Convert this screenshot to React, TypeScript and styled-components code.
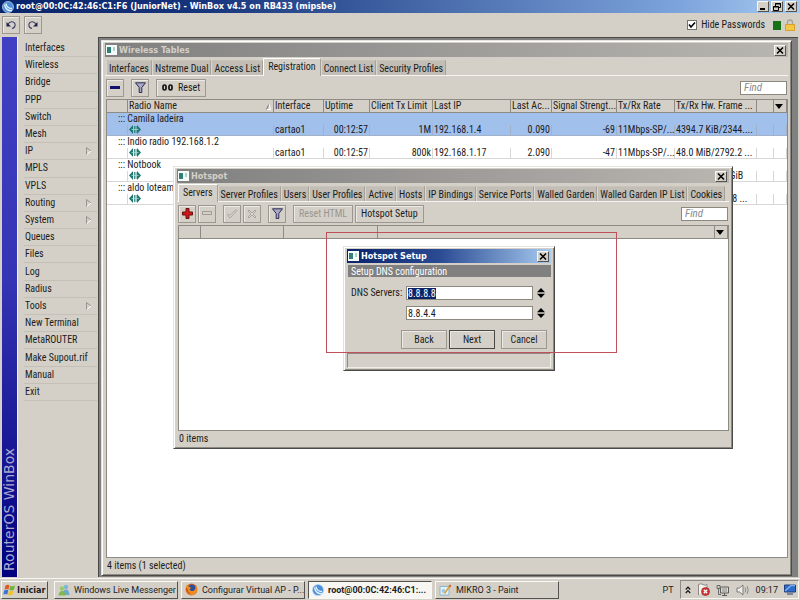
import React, { useEffect, useRef } from "react";
import styled, { createGlobalStyle, css } from "styled-components";

const FACE = "#d4d0c8";
const UI = `"Roboto Condensed", "Roboto", sans-serif`;
const CAPTION = `"DejaVu Sans Condensed", "DejaVu Sans", sans-serif`;

const GlobalStyle = createGlobalStyle`
  * { box-sizing: border-box; }
  body { margin: 0; background: ${FACE}; }
  button, input { font: inherit; color: inherit; margin: 0; }
  svg { display: block; flex: none; }
`;

const raised = css`
  border: 1px solid;
  border-color: #f8f8f4 #55534f #55534f #f8f8f4;
`;

const Screen = styled.div`
  min-height: 100vh;
  display: flex;
  flex-direction: column;
  background: ${FACE};
  color: #1c1c1c;
  font: 10px/12px ${UI};
  overflow: hidden;
`;

const AppCaption = styled.header`
  display: flex;
  align-items: center;
  gap: 2px;
  height: 13px;
  padding: 0 3px 0 2px;
  background: linear-gradient(90deg, #0a246a 0%, #16347c 25%, #7da4dc 85%, #a6caf0 100%);
`;

const CaptionText = styled.h1<{ $dim?: boolean }>`
  flex: 1;
  min-width: 0;
  margin: 0;
  overflow: hidden;
  white-space: nowrap;
  color: ${(p) => (p.$dim ? "#d4d0c8" : "#ffffff")};
  font: bold 9px/13px ${CAPTION};
`;

const CaptionButton = styled.button`
  ${raised}
  display: grid;
  place-items: center;
  width: 12px;
  height: 11px;
  padding: 0;
  background: ${FACE};
`;

const Toolbar = styled.div`
  display: flex;
  align-items: center;
  gap: 4px;
  height: 24px;
  padding: 0 5px 0 2px;
`;

const Spacer = styled.span`
  flex: 1;
`;

const ToolButton = styled.button<{ $wide?: boolean }>`
  display: flex;
  align-items: center;
  justify-content: center;
  gap: 4px;
  min-width: 18px;
  height: 18px;
  padding: ${(p) => (p.$wide ? "0 5px" : "0")};
  white-space: nowrap;
  background: ${FACE};
  border: 1px solid #9c9890;
  box-shadow: inset 1px 1px #eceae4;
  &:disabled {
    color: #9a968e;
  }
`;

const CheckLabel = styled.label`
  display: flex;
  align-items: center;
  gap: 4px;
  margin-right: 4px;
`;

const CheckBox = styled.input`
  appearance: none;
  width: 10px;
  height: 10px;
  border: 1px solid #77736c;
  background: #fff;
  &:checked {
    background: #fff
      url("data:image/svg+xml,%3Csvg xmlns='http://www.w3.org/2000/svg' viewBox='0 0 8 8'%3E%3Cpath d='M1 3.5 3 6 7 1.5' fill='none' stroke='black' stroke-width='1.6'/%3E%3C/svg%3E");
  }
`;

const LinkLight = styled.span`
  width: 8px;
  height: 9px;
  background: #177217;
`;

const Main = styled.div`
  flex: 1;
  display: flex;
  align-items: stretch;
  padding: 0 2px 1px 2px;
`;

const Brand = styled.div`
  flex: none;
  width: 15px;
  display: flex;
  align-items: center;
  padding: 6px 0 0;
  writing-mode: vertical-rl;
  transform: rotate(180deg);
  background: linear-gradient(0deg, #4040c4 0%, #3434b4 45%, #1a1a96 75%, #000080 100%);
  color: #a9a9cf;
  font: 14px/15px "DejaVu Sans", sans-serif;
  white-space: nowrap;
`;

const Nav = styled.nav`
  flex: none;
  width: 80px;
  border-left: 1px solid #f4f2ee;
  padding: 3px 0 0 6px;
`;

const NavList = styled.ul`
  display: grid;
  grid-auto-rows: 1fr;
  height: 361px;
  margin: 0;
  padding: 0;
  list-style: none;
`;

const NavItem = styled.button`
  display: flex;
  align-items: center;
  justify-content: space-between;
  width: 100%;
  height: 100%;
  padding: 0 5px 0 1px;
  border: 0;
  border-bottom: 1px solid #c4c0b8;
  background: none;
  text-align: left;
  white-space: nowrap;
`;

const Workspace = styled.main`
  position: relative;
  flex: 1;
  display: flex;
  min-width: 0;
  margin-left: 1px;
  padding: 2px 6px 1px 2px;
  background: #808080;
  border: solid #4a4844;
  border-width: 1px 0 0 1px;
`;

const Frame = styled.section`
  display: flex;
  flex-direction: column;
  min-width: 0;
  background: ${FACE};
  border: 1px solid;
  border-color: #e4e2dc #4c4a46 #4c4a46 #e4e2dc;
  box-shadow: inset 1px 1px #ffffff, inset -1px -1px #8c8882;
  padding: 2px 3px;
`;

const WirelessFrame = styled(Frame)`
  flex: 1;
`;

const HotspotFrame = styled(Frame)`
  position: absolute;
  left: 74px;
  top: 128px;
  width: 560px;
  height: 283px;
`;

const SetupFrame = styled(Frame)`
  position: absolute;
  left: 244px;
  top: 208px;
  width: 212px;
`;

const Marker = styled.div`
  position: absolute;
  left: 227px;
  top: 194px;
  width: 291px;
  height: 121px;
  border: 1px solid #c0505c;
  pointer-events: none;
`;

const Caption = styled.header<{ $active?: boolean }>`
  flex: none;
  display: flex;
  align-items: center;
  gap: 2px;
  height: 14px;
  padding: 0 2px 0 1px;
  background: ${(p) =>
    p.$active
      ? "linear-gradient(90deg, #0a246a, #2a4a92 45%, #a6caf0)"
      : "linear-gradient(90deg, #808080, #b8b6b0)"};
`;

const Tabs = styled.div`
  display: flex;
  align-items: flex-end;
  flex: none;
  height: 19px;
  padding-left: 1px;
  border-bottom: 1px solid #f6f4f0;
`;

const Tab = styled.button<{ $on?: boolean }>`
  flex: none;
  height: ${(p) => (p.$on ? 18 : 15)}px;
  padding: ${(p) => (p.$on ? "0 4px 2px" : "1px 2px 0")};
  margin-bottom: ${(p) => (p.$on ? -1 : 0)}px;
  border: 0;
  border-left: 1px solid ${(p) => (p.$on ? "#ffffff" : "#dad7d0")};
  border-right: 1px solid #a5a199;
  border-top: 1px solid ${(p) => (p.$on ? "#ffffff" : "#c8c4bc")};
  background: ${(p) => (p.$on ? FACE : "#c2beb6")};
  white-space: nowrap;
`;

const PaneTools = styled.div`
  flex: none;
  display: flex;
  align-items: center;
  gap: 7px;
  height: 23px;
  padding: 0 1px;
`;

const Pair = styled.div`
  display: flex;
  gap: 2px;
`;

const Find = styled.input`
  width: 47px;
  height: 14px;
  padding: 0 3px;
  border: 1px solid #8c8880;
  background: #fff;
  font-size: 11px;
  &::placeholder {
    color: #8a8a8a;
    font-style: italic;
    opacity: 1;
  }
`;

const TableBox = styled.div`
  flex: 1;
  margin-left: 1px;
  overflow: hidden;
  background: #fff;
  border: 1px solid #8e8a84;
`;

const Grid = styled.table`
  width: 100%;
  table-layout: fixed;
  border-collapse: separate;
  border-spacing: 0;
`;

const Col = styled.col<{ $w?: number }>`
  width: ${(p) => (p.$w ? `${p.$w}px` : "auto")};
`;

const Th = styled.th`
  height: 13px;
  padding: 0 0 0 1px;
  white-space: nowrap;
  text-align: left;
  font-weight: normal;
  background: ${FACE};
  border-right: 1px solid #8e8a84;
  border-bottom: 1px solid #8e8a84;
`;

const HeadLine = styled.span`
  display: flex;
  align-items: center;
  justify-content: space-between;
  padding-right: 2px;
`;

const Row = styled.tr<{ $selected?: boolean }>`
  background: ${(p) => (p.$selected ? "#a2c0ec" : "#ffffff")};
`;

const NoteCell = styled.td`
  height: 12px;
  padding: 0 0 1px 11px;
  line-height: 11px;
  white-space: nowrap;
  vertical-align: top;
`;

const Td = styled.td<{ $right?: boolean }>`
  height: 11px;
  padding: 0 1px;
  line-height: 10px;
  white-space: nowrap;
  vertical-align: top;
  text-align: ${(p) => (p.$right ? "right" : "left")};
  border: solid rgba(160, 156, 150, 0.4);
  border-width: 0 1px 1px 0;
`;

const Status = styled.footer`
  flex: none;
  height: 15px;
  padding-left: 2px;
  line-height: 15px;
`;

const Subtitle = styled.p`
  height: 12px;
  margin: 2px 0 9px 1px;
  padding-left: 3px;
  overflow: hidden;
  background: #808080;
  color: #ffffff;
  line-height: 14px;
`;

const Fields = styled.form`
  display: grid;
  grid-template-columns: 52px 127px 10px;
  grid-auto-rows: 14px;
  gap: 6px 3px;
  align-items: center;
  padding-left: 4px;
  white-space: nowrap;
`;

const Field = styled.input`
  grid-column: 2;
  width: 100%;
  height: 14px;
  padding: 0 1px;
  border: 1px solid #8c8880;
  background: #fff;
  outline: 0;
  &::selection {
    background: #0a246a;
    color: #fff;
  }
`;

const Spin = styled.button`
  display: grid;
  place-items: center;
  width: 10px;
  height: 12px;
  padding: 0;
  border: 0;
  background: none;
`;

const Actions = styled.div`
  display: flex;
  justify-content: flex-end;
  gap: 2px;
  padding: 10px 4px 4px 0;
`;

const ActionButton = styled.button<{ $primary?: boolean; $apart?: boolean }>`
  width: 46px;
  height: 19px;
  padding: 0;
  margin-left: ${(p) => (p.$apart ? 4 : 0)}px;
  background: ${FACE};
  border: 1px solid ${(p) => (p.$primary ? "#4a4844" : "#9c9890")};
  box-shadow: inset 1px 1px #eceae4;
`;

const DialogStatus = styled.div`
  height: 15px;
  border: 1px solid;
  border-color: #8e8a84 #f0eee8 #f0eee8 #8e8a84;
`;

const TaskBar = styled.footer`
  display: flex;
  align-items: center;
  gap: 3px;
  height: 22px;
  padding: 0 1px;
  border-top: 1px solid #f8f6f2;
  font: 9px/12px "Roboto", sans-serif;
`;

const StartButton = styled.button`
  ${raised}
  display: flex;
  align-items: center;
  gap: 1px;
  height: 18px;
  width: 47px;
  margin-right: 3px;
  padding: 0 1px;
  font: bold 9px/12px ${CAPTION};
  background: ${FACE};
`;

const Task = styled.button<{ $on?: boolean }>`
  ${raised}
  ${(p) => p.$on && css`border-color: #55534f #f8f8f4 #f8f8f4 #55534f;`}
  flex: 0 1 124px;
  display: flex;
  align-items: center;
  gap: 4px;
  min-width: 0;
  height: 18px;
  padding: 0 2px 0 3px;
  background: ${(p) => (p.$on ? "#f7f6f3" : FACE)};
  font-weight: ${(p) => (p.$on ? "bold" : "normal")};
`;

const TaskText = styled.span`
  white-space: nowrap;
`;

const Tray = styled.div`
  display: flex;
  align-items: center;
  gap: 6px;
  height: 19px;
  margin-left: 3px;
  padding: 0 2px 0 4px;
  border: 1px solid;
  border-color: #8e8a84 #f8f6f2 #f8f6f2 #8e8a84;
`;

const WinBoxIcon = () => (
  <svg width="12" height="12" viewBox="0 0 12 12">
    <circle cx="6" cy="6" r="5.5" fill="#4b8fd8" stroke="#b9d6f2" strokeWidth="0.8" />
    <path d="M2.5 3.5C3.5 8 6 10 10 9.5M4 2.5c.5 3 2.5 5 6 5" fill="none" stroke="#e6f2fc" strokeWidth="1.3" />
  </svg>
);

const WindowIcon = () => (
  <svg width="11" height="10" viewBox="0 0 11 10">
    <path d="M0 0h11v10H0z" fill="#f4fbf8" />
    <path d="M1 2h4v6H1z" fill="#2f8078" />
    <path d="M7 2h2v4H7z" fill="#a8d4ca" />
  </svg>
);

const CloseIcon = () => (
  <svg width="8" height="7" viewBox="0 0 8 7">
    <path d="M1 .5 7 6.5M7 .5 1 6.5" stroke="#000" strokeWidth="1.5" />
  </svg>
);

const MinimizeIcon = () => (
  <svg width="8" height="7" viewBox="0 0 8 7">
    <path d="M1 5h5v2H1z" fill="#000" />
  </svg>
);

const RestoreIcon = () => (
  <svg width="8" height="8" viewBox="0 0 8 8">
    <path d="M2.5 3V.5h5v4H5.5M2 1h6M.5 3.5h5v4h-5zM0 4h6" fill="none" stroke="#000" />
  </svg>
);

const UndoIcon = ({ flip = false }: { flip?: boolean }) => (
  <svg width="12" height="12" viewBox="0 0 12 12">
    <g transform={flip ? "matrix(-1 0 0 1 12 0)" : undefined}>
      <path d="M3 5.5C4 2.5 9 1.5 10 5c.5 2.5-1 4-3 4.5" fill="none" stroke="#3c3c60" strokeWidth="1.1" />
      <path d="M1.5 3v4.5H6z" fill="#23234c" />
    </g>
  </svg>
);

const LockIcon = () => (
  <svg width="10" height="12" viewBox="0 0 10 12">
    <path d="M2.5 6V3.5a2.5 2.5 0 0 1 5 0V6" fill="none" stroke="#a8a294" strokeWidth="1.3" />
    <path d="M0 5h10v7H0z" fill="#d8a02c" />
    <path d="M1 6h8v5H1z" fill="#f4c844" />
  </svg>
);

const SubmenuIcon = () => (
  <svg width="6" height="8" viewBox="0 0 6 8">
    <path d="M.5 7.5v-7L5 4" fill="none" stroke="#98948c" />
    <path d="M5 4 1 7.5" stroke="#fff" />
  </svg>
);

const MinusIcon = () => (
  <svg width="10" height="3" viewBox="0 0 10 3">
    <path d="M0 0h10v3H0z" fill="#101070" />
  </svg>
);

const HollowMinusIcon = () => (
  <svg width="10" height="5" viewBox="0 0 10 5">
    <path d="M.5 .5h9v3h-9z" fill="none" stroke="#a09c94" />
  </svg>
);

const PlusIcon = () => (
  <svg width="11" height="11" viewBox="0 0 11 11">
    <path d="M4 .5h3V4h3.5v3H7v3.5H4V7H.5V4H4z" fill="#d01818" stroke="#6c0c0c" />
  </svg>
);

const CheckIcon = () => (
  <svg width="11" height="10" viewBox="0 0 11 10">
    <path d="M.5 6 3 9l7-7.5-1-1-6 6L1.5 5z" fill="#dedbd4" stroke="#a8a49c" />
  </svg>
);

const CrossIcon = () => (
  <svg width="10" height="10" viewBox="0 0 10 10">
    <path d="M1 2 2 1l3 3 3-3 1 1-3 3 3 3-1 1-3-3-3 3-1-1 3-3z" fill="#dedbd4" stroke="#a8a49c" />
  </svg>
);

const FunnelIcon = () => (
  <svg width="11" height="11" viewBox="0 0 11 11">
    <path d="M.5 .8h10L6.8 5.5v5H4.2v-5z" fill="#a8a8c4" stroke="#2c2c54" />
  </svg>
);

const ResetIcon = () => (
  <svg width="12" height="7" viewBox="0 0 12 7">
    <rect x="1" y="1" width="3" height="5" rx="1.5" fill="none" stroke="#111" strokeWidth="1.7" />
    <rect x="7" y="1" width="3" height="5" rx="1.5" fill="none" stroke="#111" strokeWidth="1.7" />
  </svg>
);

const LinkIcon = () => (
  <svg width="12" height="9" viewBox="0 0 12 9">
    <path d="M4 0v9L0 4.5zM8 0v9l4-4.5z" fill="#1c7870" />
    <path d="M5.5 1v7M7 1v7" stroke="#1c7870" strokeWidth="0.8" />
    <path d="M2.5 4.5h7" stroke="#a4dcd2" strokeWidth="0.8" />
  </svg>
);

const SortIcon = () => (
  <svg width="5" height="7" viewBox="0 0 5 7">
    <path d="M.5 6.5 3 1" stroke="#77736c" />
    <path d="m3 1 1.5 5.5H1" fill="none" stroke="#fff" />
  </svg>
);

const DropIcon = () => (
  <svg width="8" height="5" viewBox="0 0 8 5">
    <path d="M0 0h8L4 5z" fill="#000" />
  </svg>
);

const SpinIcon = () => (
  <svg width="8" height="10" viewBox="0 0 8 10">
    <path d="M0 4.3h8L4 0zM0 5.7h8L4 10z" fill="#000" />
  </svg>
);

const WindowsIcon = () => (
  <svg width="13" height="12" viewBox="0 0 13 12">
    <path d="M2.5 1.5Q5 0 6.5 1.5L5.5 5.5Q4 4.5 1.5 5.5z" fill="#e2562c" />
    <path d="M7.3 1.8Q9.5 3 12 1.6L11 5.7Q8.5 7 6.3 5.8z" fill="#6fb43c" />
    <path d="M1.3 6.3Q3.5 5.3 5.3 6.3L4.3 10.5Q2.5 9.5.3 10.5z" fill="#3c74cc" />
    <path d="M6 6.6Q8.5 7.8 10.8 6.6L9.8 10.6Q7.5 12 5 10.8z" fill="#f2c22e" />
  </svg>
);

const MessengerIcon = () => (
  <svg width="12" height="12" viewBox="0 0 12 12">
    <circle cx="8" cy="3" r="2.2" fill="#7cb8d4" />
    <path d="M4.5 11Q5 5.5 8 5.5T11.5 11z" fill="#6aa8cc" />
    <circle cx="4" cy="4.5" r="2.2" fill="#9cc86c" />
    <path d="M.5 11.5Q1 7 4 7t3.5 4.5z" fill="#7fb850" />
  </svg>
);

const FirefoxIcon = () => (
  <svg width="13" height="13" viewBox="0 0 13 13">
    <circle cx="6.5" cy="6.5" r="6" fill="#e0701c" />
    <circle cx="6.8" cy="5.2" r="3.6" fill="#2c4c9c" />
    <path d="M.8 4Q2 2 3.5 3.5 5 3.5 6 5L4.5 6.5Q6 9 9 7.5 11 6 11 3 14 9 8.5 12 2 13 .8 4z" fill="#f08c24" />
    <path d="M1.5 5Q2 9 5 10.5" fill="none" stroke="#c23c18" />
  </svg>
);

const PaintIcon = () => (
  <svg width="13" height="12" viewBox="0 0 13 12">
    <path d="M1 2.5h9V11H1z" fill="#e4f2f8" stroke="#8cb4cc" />
    <circle cx="4.5" cy="7" r="2" fill="#9cc8e0" />
    <path d="M5.5 9.5 11.5 1" stroke="#dca040" strokeWidth="1.6" />
    <circle cx="11" cy="2" r="1.2" fill="#cc6a3c" />
  </svg>
);

const ChevronsIcon = () => (
  <svg width="6" height="8" viewBox="0 0 6 8">
    <path d="M.8 3.5 3 1.2 5.2 3.5M.8 7 3 4.7 5.2 7" fill="none" stroke="#111" strokeWidth="1.2" />
  </svg>
);

const AlertIcon = () => (
  <svg width="13" height="13" viewBox="0 0 13 13">
    <path d="M1.5 12V1.5Q4 0 6 1.5T10 1.5V7" fill="#f4f2ee" stroke="#8c8880" />
    <circle cx="8.5" cy="8.5" r="4" fill="#d43434" stroke="#8c1c1c" strokeWidth="0.6" />
    <path d="m6.8 6.8 3.4 3.4m0-3.4-3.4 3.4" stroke="#fff" strokeWidth="1.3" />
  </svg>
);

const NetworkIcon = () => (
  <svg width="14" height="12" viewBox="0 0 14 12">
    <path d="M4.5 3h8v6h-8zM6 11.5h5M8.5 9v2" fill="#dcdad6" stroke="#5c5a56" />
    <path d="M6 5h5M6 7h5" stroke="#8c8a86" />
    <path d="M1 1.5h3v3H1zM2.5 4.5v6H5" fill="none" stroke="#6c6a66" />
  </svg>
);

const SpeakerIcon = () => (
  <svg width="14" height="12" viewBox="0 0 14 12">
    <path d="M1 4h2.5L7 1v10L3.5 8H1z" fill="#f0eeea" stroke="#7c7a76" />
    <path d="M9 3.5q1.5 2.5 0 5M11 2q2.5 4 0 8" fill="none" stroke="#8c8a86" />
  </svg>
);

const DesktopIcon = () => (
  <svg width="12" height="11" viewBox="0 0 12 11">
    <path d="M.5 1h11v7H.5z" fill="#2c6cc8" stroke="#1c3c7c" />
    <path d="M1 7 7 1.5h4" fill="none" stroke="#7cb0ec" strokeWidth="1.5" />
    <path d="M3 10h6" stroke="#5c6c84" strokeWidth="1.5" />
  </svg>
);

const MENU: [string, boolean?][] = [
  ["Interfaces"], ["Wireless"], ["Bridge"], ["PPP"], ["Switch"], ["Mesh"], ["IP", true],
  ["MPLS"], ["VPLS"], ["Routing", true], ["System", true], ["Queues"], ["Files"], ["Log"],
  ["Radius"], ["Tools", true], ["New Terminal"], ["MetaROUTER"], ["Make Supout.rif"],
  ["Manual"], ["Exit"],
];

const WIRELESS_TABS = ["Interfaces", "Nstreme Dual", "Access List", "Registration", "Connect List", "Security Profiles"];
const HOTSPOT_TABS = ["Servers", "Server Profiles", "Users", "User Profiles", "Active", "Hosts", "IP Bindings", "Service Ports", "Walled Garden", "Walled Garden IP List", "Cookies"];

const COLUMNS: [string, number?][] = [
  ["", 21], ["Radio Name", 146], ["Interface", 50], ["Uptime", 46], ["Client Tx Limit", 63],
  ["Last IP", 78], ["Last Ac...", 41], ["Signal Strengt...", 65], ["Tx/Rx Rate", 58],
  ["Tx/Rx Hw. Frame ...", 82], [""], ["menu", 13],
];

const STATIONS = [
  { note: "Camila ladeira", cells: ["cartao1", "00:12:57", "1M", "192.168.1.4", "0.090", "-69", "11Mbps-SP/...", "4394.7 KiB/2344...."] },
  { note: "Indio radio 192.168.1.2", cells: ["cartao1", "00:12:57", "800k", "192.168.1.17", "2.090", "-47", "11Mbps-SP/...", "48.0 MiB/2792.2 ..."] },
  { note: "Notbook", cells: ["", "", "", "", "", "", "", "90.1 MiB/1.2 GiB"] },
  { note: "aldo loteamento", cells: ["", "", "", "", "", "", "", "10.6 MiB/290.8 ..."] },
];

const isRight = (i: number) => i === 1 || i === 2 || i === 4 || i === 5;

function TabStrip({ names, current }: { names: string[]; current: string }) {
  return (
    <Tabs role="tablist">
      {names.map((name) => (
        <Tab key={name} role="tab" aria-selected={name === current} $on={name === current}>
          {name}
        </Tab>
      ))}
    </Tabs>
  );
}

function WindowCaption({ title, active }: { title: string; active?: boolean }) {
  return (
    <Caption $active={active}>
      <WindowIcon />
      <CaptionText as="h2" $dim={!active}>{title}</CaptionText>
      <CaptionButton aria-label={`Close ${title}`}><CloseIcon /></CaptionButton>
    </Caption>
  );
}

function WirelessWindow() {
  return (
    <WirelessFrame>
      <WindowCaption title="Wireless Tables" />
      <TabStrip names={WIRELESS_TABS} current="Registration" />
      <PaneTools>
        <ToolButton aria-label="Remove"><MinusIcon /></ToolButton>
        <ToolButton aria-label="Filter"><FunnelIcon /></ToolButton>
        <ToolButton $wide><ResetIcon />Reset</ToolButton>
        <Spacer />
        <Find placeholder="Find" aria-label="Find station" />
      </PaneTools>
      <TableBox>
        <Grid>
          <colgroup>
            {COLUMNS.map(([name, width], i) => <Col key={name + i} $w={width} />)}
          </colgroup>
          <thead>
            <tr>
              {COLUMNS.map(([name], i) => (
                <Th key={name + i}>
                  {name === "menu" ? <DropIcon /> : name === "Radio Name" ? <HeadLine>{name}<SortIcon /></HeadLine> : name}
                </Th>
              ))}
            </tr>
          </thead>
          <tbody>
            {STATIONS.map((station, n) => (
              <React.Fragment key={station.note}>
                <Row $selected={n === 0}>
                  <NoteCell colSpan={12}>::: {station.note}</NoteCell>
                </Row>
                <Row $selected={n === 0}>
                  <Td />
                  <Td><LinkIcon /></Td>
                  {station.cells.map((cell, i) => <Td key={i} $right={isRight(i)}>{cell}</Td>)}
                  <Td />
                  <Td />
                </Row>
              </React.Fragment>
            ))}
          </tbody>
        </Grid>
      </TableBox>
      <Status>4 items (1 selected)</Status>
    </WirelessFrame>
  );
}

function HotspotWindow() {
  return (
    <HotspotFrame>
      <WindowCaption title="Hotspot" />
      <TabStrip names={HOTSPOT_TABS} current="Servers" />
      <PaneTools>
        <Pair>
          <ToolButton aria-label="Add"><PlusIcon /></ToolButton>
          <ToolButton aria-label="Remove" disabled><HollowMinusIcon /></ToolButton>
        </Pair>
        <Pair>
          <ToolButton aria-label="Enable" disabled><CheckIcon /></ToolButton>
          <ToolButton aria-label="Disable" disabled><CrossIcon /></ToolButton>
        </Pair>
        <ToolButton aria-label="Filter"><FunnelIcon /></ToolButton>
        <Pair>
          <ToolButton $wide disabled>Reset HTML</ToolButton>
          <ToolButton $wide>Hotspot Setup</ToolButton>
        </Pair>
        <Spacer />
        <Find placeholder="Find" aria-label="Find server" />
      </PaneTools>
      <TableBox>
        <Grid>
          <colgroup>
            <Col $w={22} /><Col $w={83} /><Col $w={94} /><Col /><Col $w={13} />
          </colgroup>
          <thead>
            <tr><Th /><Th /><Th /><Th /><Th><DropIcon /></Th></tr>
          </thead>
        </Grid>
      </TableBox>
      <Status>0 items</Status>
    </HotspotFrame>
  );
}

function SetupDialog() {
  const first = useRef<HTMLInputElement>(null);
  useEffect(() => {
    first.current?.focus();
    first.current?.select();
  }, []);
  return (
    <SetupFrame role="dialog" aria-label="Hotspot Setup">
      <WindowCaption title="Hotspot Setup" active />
      <Subtitle>Setup DNS configuration</Subtitle>
      <Fields id="dns" onSubmit={(e) => e.preventDefault()}>
        <label htmlFor="dns1">DNS Servers:</label>
        <Field id="dns1" ref={first} defaultValue="8.8.8.8" />
        <Spin type="button" aria-label="Change first server"><SpinIcon /></Spin>
        <Field aria-label="Second DNS server" defaultValue="8.8.4.4" />
        <Spin type="button" aria-label="Change second server"><SpinIcon /></Spin>
      </Fields>
      <Actions>
        <ActionButton>Back</ActionButton>
        <ActionButton form="dns" $primary>Next</ActionButton>
        <ActionButton $apart>Cancel</ActionButton>
      </Actions>
      <DialogStatus />
    </SetupFrame>
  );
}

export default function App() {
  return (
    <Screen>
      <GlobalStyle />
      <AppCaption>
        <WinBoxIcon />
        <CaptionText>root@00:0C:42:46:C1:F6 (JuniorNet) - WinBox v4.5 on RB433 (mipsbe)</CaptionText>
        <Pair>
          <CaptionButton aria-label="Minimize"><MinimizeIcon /></CaptionButton>
          <CaptionButton aria-label="Restore"><RestoreIcon /></CaptionButton>
          <CaptionButton aria-label="Close"><CloseIcon /></CaptionButton>
        </Pair>
      </AppCaption>
      <Toolbar>
        <ToolButton aria-label="Undo"><UndoIcon /></ToolButton>
        <ToolButton aria-label="Redo"><UndoIcon flip /></ToolButton>
        <Spacer />
        <CheckLabel><CheckBox type="checkbox" defaultChecked />Hide Passwords</CheckLabel>
        <LinkLight />
        <LockIcon />
      </Toolbar>
      <Main>
        <Brand>RouterOS WinBox</Brand>
        <Nav>
          <NavList>
            {MENU.map(([name, sub]) => (
              <li key={name}><NavItem>{name}{sub && <SubmenuIcon />}</NavItem></li>
            ))}
          </NavList>
        </Nav>
        <Workspace>
          <WirelessWindow />
          <HotspotWindow />
          <SetupDialog />
          <Marker />
        </Workspace>
      </Main>
      <TaskBar>
        <StartButton><WindowsIcon />Iniciar</StartButton>
        <Task><MessengerIcon /><TaskText>Windows Live Messenger</TaskText></Task>
        <Task><FirefoxIcon /><TaskText>Configurar Virtual AP - P...</TaskText></Task>
        <Task $on><WinBoxIcon /><TaskText>root@00:0C:42:46:C1:...</TaskText></Task>
        <Task><PaintIcon /><TaskText>MIKRO 3 - Paint</TaskText></Task>
        <Spacer />
        <span>PT</span>
        <Tray>
          <ChevronsIcon />
          <AlertIcon />
          <NetworkIcon />
          <SpeakerIcon />
          <span>09:17</span>
          <DesktopIcon />
        </Tray>
      </TaskBar>
    </Screen>
  );
}
